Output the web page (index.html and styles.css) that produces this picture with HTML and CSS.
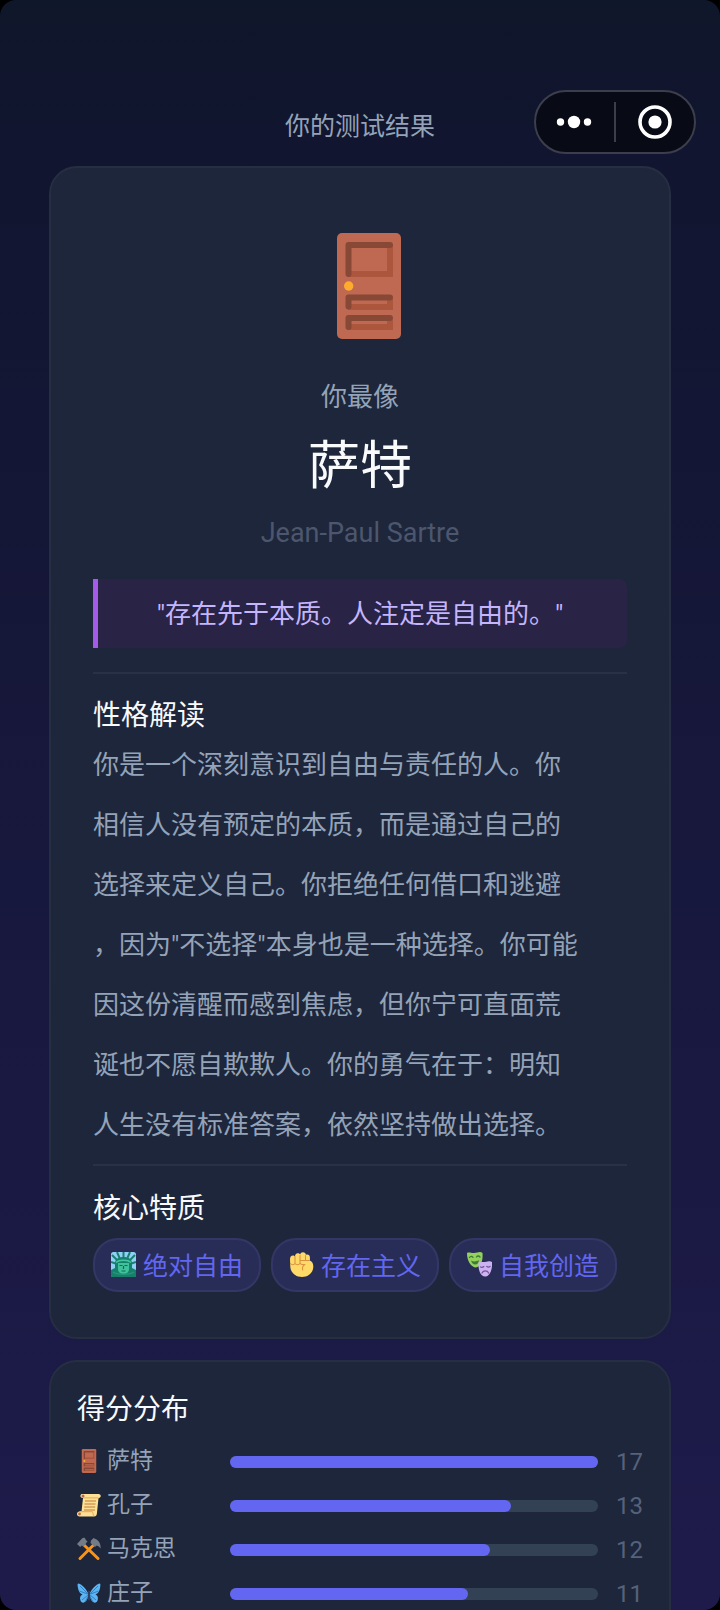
FILE: index.html
```html
<!DOCTYPE html>
<html lang="zh-CN">
<head>
<meta charset="utf-8">
<meta name="viewport" content="width=device-width, initial-scale=1">
<title>你的测试结果</title>
<link rel="stylesheet" href="styles.css">
</head>
<body>
<svg class="sprite" aria-hidden="true">
  <symbol id="door" viewBox="0 0 64 106">
    <rect width="64" height="106" rx="5" fill="#bf6952"/>
    <path d="M53 12V41H11M53 66v8H11M53 87v7H11" fill="none" stroke="#ad563e" stroke-width="6"/>
    <path d="M11.500 41V12H53M11.500 73.500V64.500H53M11.500 94V85H53" fill="none" stroke="#874836" stroke-width="6" stroke-linecap="round" stroke-linejoin="round"/>
    <circle cx="11.700" cy="53" r="4.700" fill="#ffab2e"/>
  </symbol>
</svg>
<div class="screen">
  <header class="header">
    <h1 class="header-title">你的测试结果</h1>
    <div class="capsule">
      <button class="capsule-button" type="button" aria-label="更多">
        <svg width="38" height="14" viewBox="0 0 38 14" fill="#fff"><circle cx="4.500" cy="7" r="3.700"/><circle cx="18" cy="7" r="6.200"/><circle cx="31.500" cy="7" r="3.700"/></svg>
      </button>
      <span class="capsule-line"></span>
      <button class="capsule-button" type="button" aria-label="关闭">
        <svg width="34" height="34" viewBox="0 0 34 34"><circle cx="17" cy="17" r="15" fill="none" stroke="#fff" stroke-width="3.600"/><circle cx="17" cy="17" r="6.600" fill="#fff"/></svg>
      </button>
    </div>
  </header>

  <main class="content">
    <article class="card result">
      <svg class="result-icon" width="64" height="106" role="img" aria-label="门"><use href="#door"/></svg>
      <p class="result-lead">你最像</p>
      <h2 class="result-name">萨特</h2>
      <p class="result-latin">Jean-Paul Sartre</p>
      <blockquote class="quote">"存在先于本质。人注定是自由的。"</blockquote>
      <section class="section">
        <h3 class="heading">性格解读</h3>
        <p class="analysis">你是一个深刻意识到自由与责任的人。你<br>相信人没有预定的本质，而是通过自己的<br>选择来定义自己。你拒绝任何借口和逃避<br>，因为"不选择"本身也是一种选择。你可能<br>因这份清醒而感到焦虑，但你宁可直面荒<br>诞也不愿自欺欺人。你的勇气在于：明知<br>人生没有标准答案，依然坚持做出选择。</p>
      </section>
      <section class="section">
        <h3 class="heading">核心特质</h3>
        <ul class="tags">
          <li class="tag">
            <svg width="25" height="25" viewBox="0 0 25 25" aria-hidden="true">
              <rect width="25" height="25" rx="2.500" fill="#8fd0f5"/>
              <path d="M1 3l6 6M6 0l3 7M12.500 0v6M19 0l-3 7M24 3l-6 6M0 10l6 2M25 10l-6 2" stroke="#1c7f72" stroke-width="2"/>
              <path d="M0 25V18l4-2V11c0-4 4-6 8.500-6S21 7 21 11v5l4 2v7z" fill="#17806b"/>
              <path d="M7 11h11v6c0 3-2.500 5-5.500 5S7 20 7 17z" fill="#3fc29b"/>
              <path d="M5 10.500c3-3 12-3 15 0" fill="none" stroke="#42c7a1" stroke-width="1.500"/>
              <path d="M8.500 13.500h3M13.500 13.500h3M12.500 14v3M10.500 19h4" stroke="#13674f" stroke-width="1.200"/>
              <path d="M2 20c4 3 17 3 21 0" fill="none" stroke="#24987a" stroke-width="1.500"/>
            </svg>
            绝对自由
          </li>
          <li class="tag">
            <svg width="25" height="25" viewBox="0 0 25 25" aria-hidden="true">
              <path d="M1 7.500C1 5 2 3.500 4 3.500c1 0 1.500.5 2 1C6 2.500 7 1.200 8.800 1.200c1.300 0 2 .6 2.400 1.300C11.500 1 12.500.2 14 .2c1.700 0 2.700 1.200 2.900 2.600 2.300-.8 4 .5 4 2.700v3c2.300 1 3.400 3 3.400 6C24.300 20.500 19.500 25 13 25S1.500 20.500 1.300 14.500z" fill="#ffda68"/>
              <path d="M1.500 11.500c1 1.600 3.500 1.600 4.500 0 1 1.600 4 1.600 5 0M6 11.500v-7M11 11.500v-8M16.500 8V3.500M20.500 8.500H11.500c-1.500 2 0 4 2 4h2.500c-2 1-3 3-2.300 5.500" fill="none" stroke="#db9340" stroke-width="1.100" stroke-linecap="round" stroke-linejoin="round"/>
            </svg>
            存在主义
          </li>
          <li class="tag">
            <svg width="25" height="25" viewBox="0 0 25 25" aria-hidden="true">
              <path d="M0 1c2-1.200 3.500 0 7 0s6-2 8.500 0c.5 7-1 12-5 14-1.500.7-3 .5-4.500-.5C2 12 0 7 0 1z" fill="#93d15c"/>
              <path d="M2.500 5.500c1-1.500 2.500-1.500 3.500-.2M9.500 5c1-1.500 2.500-1.200 3.500 0" fill="none" stroke="#3e7a35" stroke-width="1.300" stroke-linecap="round"/>
              <path d="M4 8.500c2.500 1.500 5.500 1.200 8-.5-.3 3-1.800 4.500-3.800 4.500S4.800 11 4 8.500z" fill="#3e7a35"/>
              <path d="M11.500 10.500c1.500-1.500 3.500 0 6.500-.5s5-1.500 7 0c.4 5-.5 10-3.500 13-1.800 2-4.500 2-6.300.5-3-2.500-4-8-3.700-13z" fill="#cdb2f2"/>
              <path d="M13.500 15c1.200.6 2.300.5 3.300-.4M19.800 14.500c1.200.8 2.300.7 3.200 0M15 21c1-2.800 5.500-3 6.700 0" fill="none" stroke="#75519f" stroke-width="1.300" stroke-linecap="round"/>
            </svg>
            自我创造
          </li>
        </ul>
      </section>
    </article>

    <section class="card scores">
      <h3 class="heading">得分分布</h3>
      <ul class="score-list">
        <li class="score">
          <span class="score-name"><svg width="24" height="24" aria-hidden="true"><use href="#door"/></svg>萨特</span>
          <span class="bar"><span class="bar-fill" style="width:100%"></span></span>
          <span class="score-value">17</span>
        </li>
        <li class="score">
          <span class="score-name">
            <svg width="24" height="24" viewBox="0 0 24 24" aria-hidden="true">
              <path d="M5 1h16.500C23 1 24 2 23.700 3.500 23.300 5 22 5 21.500 5L20 19.500C20 22 19 23.500 17 23.500H2.500C1 23.500 0 22.500 0 21s1-2.500 2.500-2.500h2L6 5C4 5 3.200 3.700 3.500 2.500 3.700 1.500 4.200 1 5 1z" fill="#ffe094"/>
              <path d="M6 4.800h15.500M2.500 18.700H15c1 0 .8 2.800 2 4.500" fill="none" stroke="#edb35a" stroke-width="1.200"/>
              <circle cx="6" cy="3" r="1.500" fill="#b96b4a"/><circle cx="2.500" cy="21" r="1.400" fill="#b96b4a"/>
              <path d="M8 8h11M7.500 11h11M7.200 14h11M7 17h11" stroke="#c17a3b" stroke-width="1.200"/>
            </svg>孔子</span>
          <span class="bar"><span class="bar-fill" style="width:76.470%"></span></span>
          <span class="score-value">13</span>
        </li>
        <li class="score">
          <span class="score-name">
            <svg width="24" height="24" viewBox="0 0 24 24" aria-hidden="true">
              <path d="M7 8l14 13.500M16.500 8L3 21.500" stroke="#f6941d" stroke-width="3" stroke-linecap="round"/>
              <path d="M0 7l5-5.500c1-1 2.200-.8 3-.3l1 2 1.500 1-4 5.500-1.700-1.200L3.200 10z" fill="#737b87"/>
              <path d="M14 3.500L16.500 1l2 1c3 1 5.300 4.500 5.200 9.500-1.200-1.700-2.500-2.500-4-3L18 10l-4.500-4z" fill="#737b87"/>
            </svg>马克思</span>
          <span class="bar"><span class="bar-fill" style="width:70.590%"></span></span>
          <span class="score-value">12</span>
        </li>
        <li class="score">
          <span class="score-name">
            <svg width="24" height="24" viewBox="0 0 24 24" aria-hidden="true">
              <path d="M11.500 13C9.500 8 5 3.500 1.500 2.500.3 2.500.5 4 .8 6c.6 4 2 6.500 4.700 7.500-2.500 1-3 3.500-2 6 .5 1.700 2 2.500 3.500 2 2.500-.8 4-4 4.500-8.500zM12.500 13c2-5 6.500-9.500 10-10.500 1.200 0 1 1.500.7 3.500-.6 4-2 6.500-4.700 7.500 2.500 1 3 3.500 2 6-.5 1.700-2 2.500-3.500 2-2.500-.8-4-4-4.500-8.500z" fill="#5cb4f2"/>
              <path d="M11 13L3 5M10.500 13l-8-3M11 14l-6 5M11.500 14.500L8 21M13 13l8-8M13.500 13l8-3M13 14l6 5M12.500 14.500L16 21" stroke="#2673b8" stroke-width=".8"/>
              <path d="M12 10.500v8" stroke="#31415f" stroke-width="1.800" stroke-linecap="round"/>
            </svg>庄子</span>
          <span class="bar"><span class="bar-fill" style="width:64.710%"></span></span>
          <span class="score-value">11</span>
        </li>
      </ul>
    </section>
  </main>
</div>
</body>
</html>
```
FILE: styles.css
```css
* {
  box-sizing: border-box;
}

html {
  background: #000;
}

body {
  margin: 0;
  font-family: Roboto, "Noto Sans CJK SC", sans-serif;
  font-size: 26px;
  color: #94a3b8;
}

h1, h2, h3, p, ul, blockquote {
  margin: 0;
  padding: 0;
  font-weight: 400;
}

ul {
  list-style: none;
}

svg {
  display: block;
  flex: none;
}

.sprite {
  position: absolute;
  width: 0;
  height: 0;
}

.screen {
  height: 100vh;
  overflow: hidden;
  border-radius: 16px;
  background: linear-gradient(180deg, #0f172a 0%, #11152f 8%, #1e1b4b 100%);
}

.header {
  display: grid;
  grid-template-columns: 1fr auto 1fr;
  align-items: end;
  padding: 90px 24px 12px;
}

.header-title {
  grid-column: 2;
  font-size: 25px;
  line-height: 54px;
}

.capsule {
  display: flex;
  align-items: center;
  justify-self: end;
  width: 162px;
  height: 64px;
  border: 2px solid #3c3e4c;
  border-radius: 32px;
  background: #080b16;
}

.capsule-button {
  display: flex;
  flex: 1;
  align-items: center;
  justify-content: center;
  height: 100%;
  padding: 0;
  border: 0;
  background: none;
}

.capsule-line {
  width: 2px;
  height: 40px;
  background: #3c3e4c;
}

.content {
  display: flex;
  flex-direction: column;
  gap: 21px;
  padding: 0 49px 24px;
}

.card {
  border: 2px solid #262e42;
  border-radius: 28px;
  background: #1e263b;
}

.result {
  padding: 65px 42px 45px;
  text-align: center;
}

.result-icon {
  margin: 0 auto;
  padding-left: 18px;
  box-sizing: content-box;
}

.result-lead {
  margin-top: 38px;
  line-height: 40px;
}

.result-name {
  margin-top: 18px;
  font-size: 52px;
  line-height: 64px;
  color: #f8fafc;
}

.result-latin {
  margin-top: 14px;
  font-size: 27px;
  line-height: 40px;
  color: #4c576d;
}

.quote {
  margin-top: 26px;
  padding: 15px 19px 13px 14px;
  border-left: 5px solid #a35be8;
  border-radius: 0 8px 8px 0;
  background: #292346;
  line-height: 41px;
  color: #c4b5fd;
}

.section {
  margin-top: 24px;
  padding-top: 22px;
  border-top: 2px solid #293145;
  text-align: left;
}

.section + .section {
  margin-top: 9px;
  padding-top: 23px;
}

.heading {
  font-size: 28px;
  line-height: 40px;
  color: #f8fafc;
}

.analysis {
  margin-top: -1px;
  line-height: 60px;
}

.tags {
  display: flex;
  flex-wrap: wrap;
  gap: 10px;
  margin-top: 9px;
}

.tag {
  display: flex;
  align-items: center;
  gap: 7px;
  height: 54px;
  padding: 0 16px 2px;
  border: 2px solid #343765;
  border-radius: 25px;
  background: #282d57;
  font-size: 25px;
  color: #6366f1;
}

.scores {
  padding: 28px 26px 40px;
}

.score-list {
  display: grid;
  gap: 12px;
  margin-top: 15px;
}

.score {
  display: grid;
  grid-template-columns: 153px 1fr 45px;
  align-items: center;
  height: 32px;
  font-size: 24px;
  line-height: 32px;
}

.score-name {
  display: flex;
  align-items: center;
  gap: 6px;
  padding-bottom: 1px;
  font-size: 23px;
}

.bar {
  height: 12px;
  border-radius: 6px;
  background: #334155;
}

.bar-fill {
  display: block;
  height: 100%;
  border-radius: 6px;
  background: #6366f1;
}

.score-value {
  text-align: right;
  color: #56617a;
}
```
